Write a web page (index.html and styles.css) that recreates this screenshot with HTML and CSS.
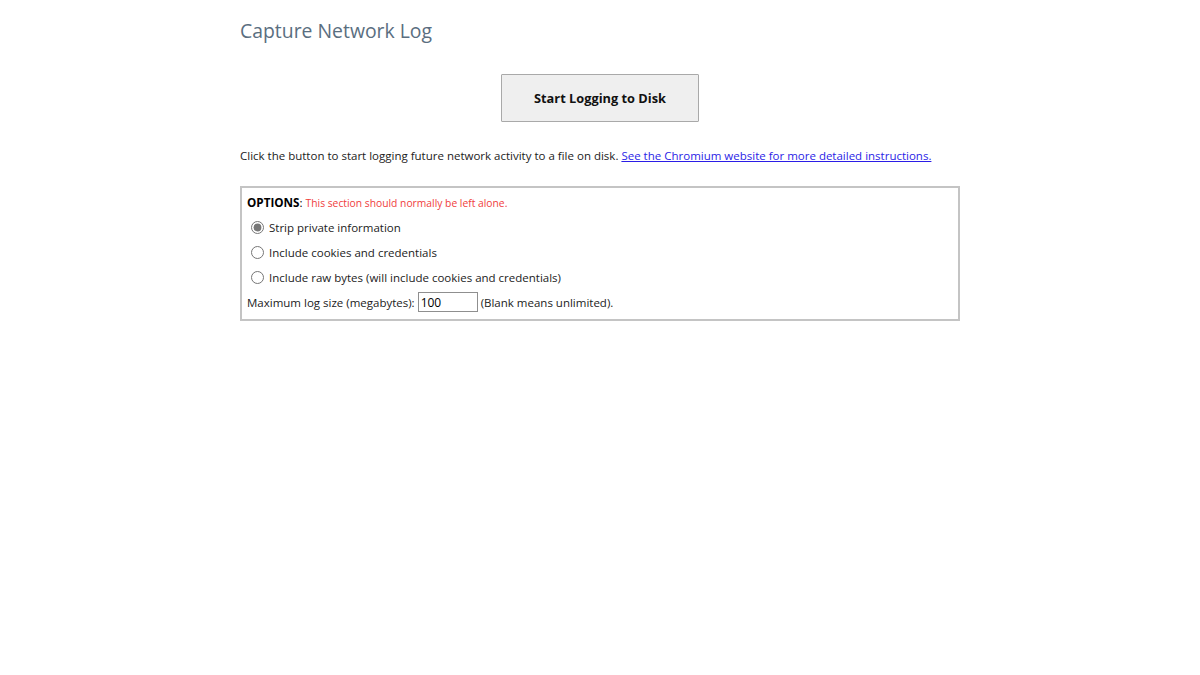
FILE: index.html
```html
<!DOCTYPE html>
<html lang="en">
<head>
    <meta charset="UTF-8">
    <title>Capture Network Log</title>
    <link rel="stylesheet" href="styles.css">
</head>
<body>
    <div class="page">
        <h1 class="title">Capture Network Log</h1>
        <div class="start-row">
            <button class="start-button">Start Logging to Disk</button>
        </div>
        <p class="intro">Click the button to start logging future network activity to a file on disk. <a href="#">See the Chromium website for more detailed instructions.</a></p>
        <fieldset class="options">
            <div class="options-head"><b>OPTIONS</b>: <span class="warning">This section should normally be left alone.</span></div>
            <label class="option"><input type="radio" name="mode" checked> Strip private information</label>
            <label class="option"><input type="radio" name="mode"> Include cookies and credentials</label>
            <label class="option"><input type="radio" name="mode"> Include raw bytes (will include cookies and credentials)</label>
            <div class="size-row">
                Maximum log size (megabytes): <input class="size-input" type="text" value="100"> (Blank means unlimited).
            </div>
        </fieldset>
    </div>
</body>
</html>
```

FILE: styles.css
```css
body {
    margin: 0;
    background: #fff;
    color: #222;
    font-family: "Open Sans", "Noto Sans", sans-serif;
    font-size: 11.5px;
}
.page {
    width: 720px;
    margin: 0 auto;
    padding-top: 16px;
}
.title {
    margin: 0;
    font-size: 19.4px;
    font-weight: normal;
    color: #5a6e80;
    line-height: 30px;
}
.start-row {
    display: flex;
    justify-content: center;
    margin-top: 28px;
}
.start-button {
    width: 198px;
    height: 48px;
    background: #efefef;
    border: 1px solid #a9a9a9;
    border-radius: 1px;
    font-family: inherit;
    font-size: 12.8px;
    font-weight: bold;
    color: #111;
}
.intro {
    margin: 25px 0 0;
    line-height: 18px;
    white-space: nowrap;
}
.intro a {
    color: #2b1de6;
}
.options {
    margin: 21px 0 0;
    padding: 5px 5px 5px;
    border: 2px solid #c4c4c4;
    min-width: 0;
}
.options-head {
    line-height: 18px;
    margin-bottom: 3px;
    color: #000;
}
.options-head b {
    font-size: 11.7px;
}
.warning {
    color: #f03c3c;
    font-size: 10.3px;
}
.option {
    display: flex;
    align-items: center;
    gap: 2px;
    height: 25px;
}
.option input {
    margin: 0 3px 0 4px;
    width: 13px;
    height: 13px;
    accent-color: #777;
}
.size-row {
    display: flex;
    align-items: center;
    gap: 3px;
    height: 24px;
}
.size-input {
    width: 54px;
    height: 16px;
    padding: 1px 2px;
    border: 1px solid #8f8f8f;
    font-family: inherit;
    font-size: 12px;
    color: #000;
}
```
